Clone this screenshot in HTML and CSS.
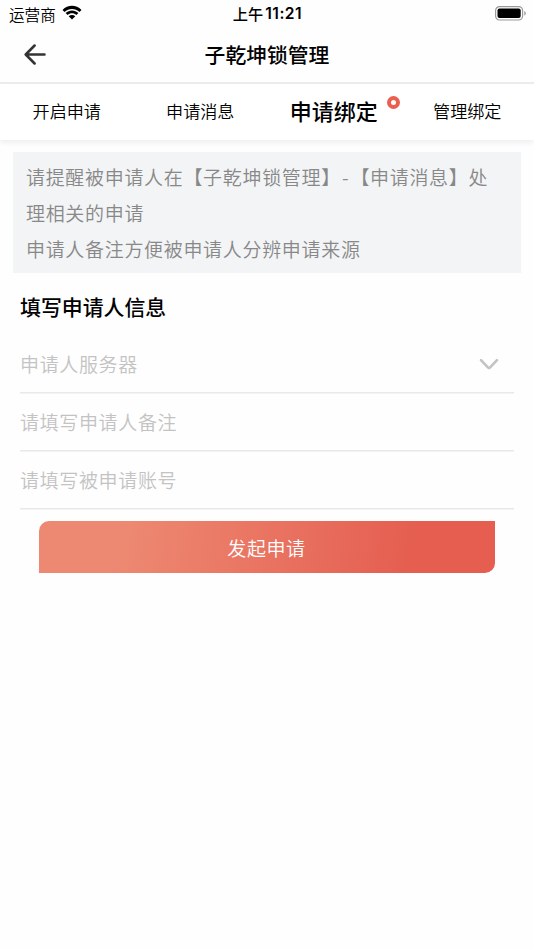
FILE: index.html
```html
<!DOCTYPE html>
<html lang="zh-CN">
<head>
<meta charset="utf-8">
<title>子乾坤锁管理</title>
<link rel="stylesheet" href="styles.css">
</head>
<body>
<div class="status">
  <div class="carrier"><span>运营商</span>
    <svg class="wifi" width="20" height="15" viewBox="0 0 20 15"><path d="M.5 4.900C5.800-.7 14.200-.7 19.500 4.900L17.500 6.900C13.300 2.900 6.700 2.900 2.500 6.900ZM3.600 8.100c3.600-3.600 9.200-3.600 12.800 0L14.400 10.100c-2.500-2.400-6.300-2.400-8.800 0ZM6.700 11.300c1.900-1.800 4.700-1.800 6.600 0L10 14.600Z"/></svg>
  </div>
  <div class="time"><span>上午</span><span class="digits">11:21</span></div>
  <svg class="battery" width="32" height="16" viewBox="0 0 32 16"><rect x=".6" y=".6" width="27" height="13.400" rx="4" fill="none" stroke="#999" stroke-width="1.200"/><rect x="2.500" y="2.500" width="23.200" height="9.600" rx="2" fill="#000"/><path d="M29.300 5v4.600c2-.8 2-3.800 0-4.600Z" fill="#999"/></svg>
</div>
<header class="navbar">
  <svg class="back" width="22" height="22" viewBox="0 0 22 22"><path d="M10.600 1.500 1.700 10.500l8.900 9M2 10.500H20.500"/></svg>
  <h1>子乾坤锁管理</h1>
</header>
<nav class="tabs">
  <a class="tab">开启申请</a>
  <a class="tab">申请消息</a>
  <a class="tab active"><span>申请绑定</span><i class="dot"></i></a>
  <a class="tab">管理绑定</a>
</nav>
<main>
  <section class="notice">
    <p>请提醒被申请人在【子乾坤锁管理】<span class="dash">-</span>【申请消息】处<br>理相关的申请</p>
    <p>申请人备注方便被申请人分辨申请来源</p>
  </section>
  <form class="form">
    <h2>填写申请人信息</h2>
    <div class="field"><span>申请人服务器</span>
      <svg width="20" height="14" viewBox="0 0 20 14"><path d="M2 2.200 9.100 9.700Q10 10.600 10.900 9.700L18 2.200"/></svg>
    </div>
    <div class="field"><span>请填写申请人备注</span></div>
    <div class="field"><span>请填写被申请账号</span></div>
    <button type="button" class="submit">发起申请</button>
  </form>
</main>
</body>
</html>
```
FILE: styles.css
```css
* { box-sizing: border-box; }
body {
  margin: 0;
  height: 950px;
  background: #fefefe;
  color: #000;
  font-family: "Noto Sans CJK SC", sans-serif;
  font-weight: 350;
}
h1, h2, p { margin: 0; }
.status {
  display: grid;
  grid-template-columns: 1fr auto 1fr;
  height: 28px;
  padding: 0 7px 0 9px;
  align-items: center;
  font-size: 15.600px;
  line-height: 26px;
}
.carrier { display: flex; align-items: center; gap: 6px; }
.carrier span { margin-top: -1px; }
.wifi { margin-top: -3px; }
.time { display: flex; gap: 2px; margin: -1px 1px 0 0; font-size: 15.200px; font-weight: 500; }
.digits { font-family: Inter, sans-serif; font-size: 15.600px; font-weight: 600; letter-spacing: .5px; line-height: 28px; }
.battery { justify-self: end; }
.navbar {
  display: grid;
  grid-template-columns: 60px 1fr 60px;
  align-items: center;
  height: 56px;
  border-bottom: 2px solid #ececec;
}
.navbar h1 { font-size: 20.800px; font-weight: 500; text-align: center; line-height: 52px; height: 54px; }
.back { margin-left: 24px; fill: none; stroke: #333; stroke-width: 2.500; stroke-linecap: round; stroke-linejoin: round; }
.tabs {
  display: grid;
  grid-template-columns: repeat(4, 1fr);
  height: 56px;
  background: #fff;
  box-shadow: 0 3px 5px rgba(0, 0, 0, .06);
}
.tab { position: relative; text-align: center; font-size: 17.100px; line-height: 54px; }
.active { font-size: 22px; font-weight: 500; line-height: 52px; }
.dot {
  position: absolute;
  top: 12px;
  right: .5px;
  width: 13px;
  height: 13px;
  border: 4px solid #e9604f;
  border-radius: 50%;
  background: #fff;
}
main { padding: 12px 13px 0; }
.notice {
  height: 120.500px;
  padding: 6.500px 13px;
  background: #f3f4f6;
  color: #888;
  font-size: 19px;
  letter-spacing: .68px;
  line-height: 36px;
  white-space: nowrap;
}
.dash { margin: 0 1.300px 0 1px; }
.form { padding: 0 7px; }
.form h2 { font-size: 20.900px; font-weight: 500; line-height: 34px; padding-top: 16px; height: 62.500px; }
.field {
  display: flex;
  align-items: center;
  justify-content: space-between;
  height: 58px;
  padding-right: 15px;
  border-bottom: 1px solid #e9e9e9;
  box-shadow: 0 1px #f3f3f3;
  color: #c3c3c3;
  font-size: 19px;
  letter-spacing: .65px;
}
.field svg { margin-top: 2px; fill: none; stroke: #c3c3c3; stroke-width: 2.600; stroke-linecap: round; }
.submit {
  display: block;
  width: 456px;
  height: 52px;
  margin: 12px 19px 0;
  padding: 0 1px 0 0;
  border: 0;
  border-radius: 10px 0 10px 0;
  background: linear-gradient(100deg, #ed8972 18%, #e55e50 82%);
  color: #fff;
  font: 350 19px "Noto Sans CJK SC", sans-serif;
  letter-spacing: .6px;
}
```
